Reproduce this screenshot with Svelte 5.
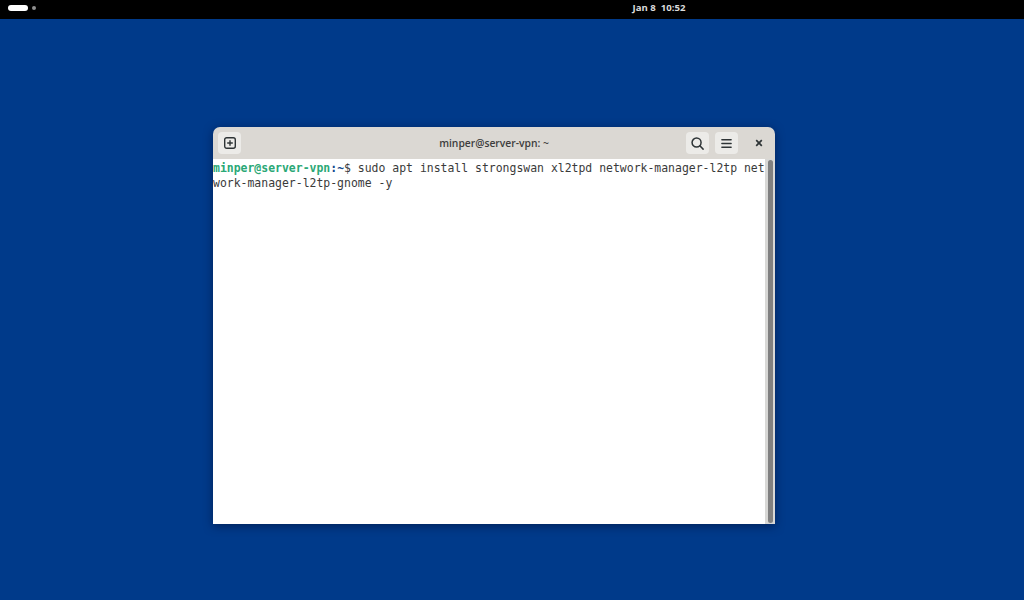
<script>
	let user = 'minper@server-vpn';
	let lines = ['sudo apt install strongswan xl2tpd network-manager-l2tp net', 'work-manager-l2tp-gnome -y'];
</script>

<div class="screen">
	<div class="topbar">
		<div class="workspaces">
			<span class="pill"></span>
			<span class="dot"></span>
		</div>
		<div class="clock">Jan 8&nbsp; 10:52</div>
	</div>
	<div class="desktop">
		<div class="window">
			<div class="header">
				<div class="side">
					<button class="btn">
						<svg width="14" height="14" viewBox="0 0 14 14" fill="none" stroke="#2e3436" stroke-width="1.4">
							<rect x="1.7" y="1.7" width="10.6" height="10.6" rx="2" />
							<path d="M7 4.2v5.6M4.2 7h5.6" />
						</svg>
					</button>
				</div>
				<div class="title">minper@server-vpn: ~</div>
				<div class="side right">
					<button class="btn">
						<svg width="15" height="15" viewBox="0 0 16 16" fill="none" stroke="#2e3436" stroke-width="1.6">
							<circle cx="7" cy="7" r="4.8" />
							<path d="M10.5 10.5l3.5 3.5" stroke-linecap="round" />
						</svg>
					</button>
					<button class="btn">
						<svg width="13" height="13" viewBox="0 0 14 14" fill="none" stroke="#2e3436" stroke-width="1.5">
							<path d="M2 3h10M2 7h10M2 11h10" stroke-linecap="round" />
						</svg>
					</button>
					<button class="btn close">
						<svg width="10" height="10" viewBox="0 0 10 10" fill="none" stroke="#2e3436" stroke-width="1.7">
							<path d="M2.2 2.2l5.6 5.6M7.8 2.2l-5.6 5.6" />
						</svg>
					</button>
				</div>
			</div>
			<div class="body">
				<div class="term">
					<div class="line"><span class="prompt">{user}</span><span class="path">:~</span>$ {lines[0]}</div>
					<div class="line">{lines[1]}</div>
				</div>
				<div class="scroll"><div class="thumb"></div></div>
			</div>
		</div>
	</div>
</div>

<style>
	:global(body) {
		margin: 0;
		background: #003a8a;
	}

	.screen {
		width: 1024px;
		height: 600px;
		display: flex;
		flex-direction: column;
		overflow: hidden;
		font-family: "Open Sans", "Noto Sans", sans-serif;
	}

	.topbar {
		height: 19px;
		background: #000;
		position: relative;
		display: flex;
		align-items: center;
		justify-content: center;
		flex-shrink: 0;
	}

	.workspaces {
		position: absolute;
		left: 8px;
		top: 5px;
		display: flex;
		align-items: center;
		gap: 4px;
	}

	.pill {
		width: 20px;
		height: 6px;
		border-radius: 3px;
		background: #fff;
	}

	.dot {
		width: 4px;
		height: 4px;
		border-radius: 50%;
		background: #8f8f8f;
	}

	.clock {
		margin-left: 294px;
		margin-top: -5px;
		color: #dcdcdc;
		font-size: 9.6px;
		font-weight: 700;
	}

	.desktop {
		flex: 1;
		background: #003a8a;
		padding: 108px 0 0 213px;
	}

	.window {
		width: 562px;
		height: 397px;
		border-radius: 7px 7px 0 0;
		overflow: hidden;
		display: flex;
		flex-direction: column;
		box-shadow: 0 2px 10px rgba(0, 10, 40, 0.5);
	}

	.header {
		height: 32px;
		background: #dbd8d3;
		display: flex;
		align-items: center;
		padding: 0 5px;
		flex-shrink: 0;
	}

	.side {
		flex: 1;
		display: flex;
		gap: 6px;
	}

	.right {
		justify-content: flex-end;
	}

	.btn {
		width: 23px;
		height: 22px;
		margin: 0;
		padding: 0;
		border: none;
		border-radius: 4px;
		background: #ecebe8;
		display: flex;
		align-items: center;
		justify-content: center;
	}

	.close {
		background: transparent;
		margin-left: 5px;
		margin-right: 1px;
		width: 20px;
	}

	.title {
		text-align: center;
		font-size: 10.3px;
		font-weight: 600;
		color: #3d3d3d;
	}

	.body {
		flex: 1;
		display: flex;
		background: #fff;
	}

	.term {
		flex: 1;
		min-width: 0;
		padding-top: 2px;
		font-family: "DejaVu Sans Mono", "Liberation Mono", monospace;
		font-size: 11.46px;
		line-height: 15px;
		color: #3a3a3a;
	}

	.line {
		white-space: pre;
	}

	.prompt {
		color: #2aa876;
		font-weight: 700;
	}

	.path {
		color: #12488b;
		font-weight: 700;
	}

	.scroll {
		width: 10px;
		flex-shrink: 0;
		background: #d8d8d6;
		padding: 1px 2px 1px 3px;
		box-sizing: border-box;
		display: flex;
	}

	.thumb {
		flex: 1;
		background: #808080;
		border-radius: 3px;
	}
</style>
